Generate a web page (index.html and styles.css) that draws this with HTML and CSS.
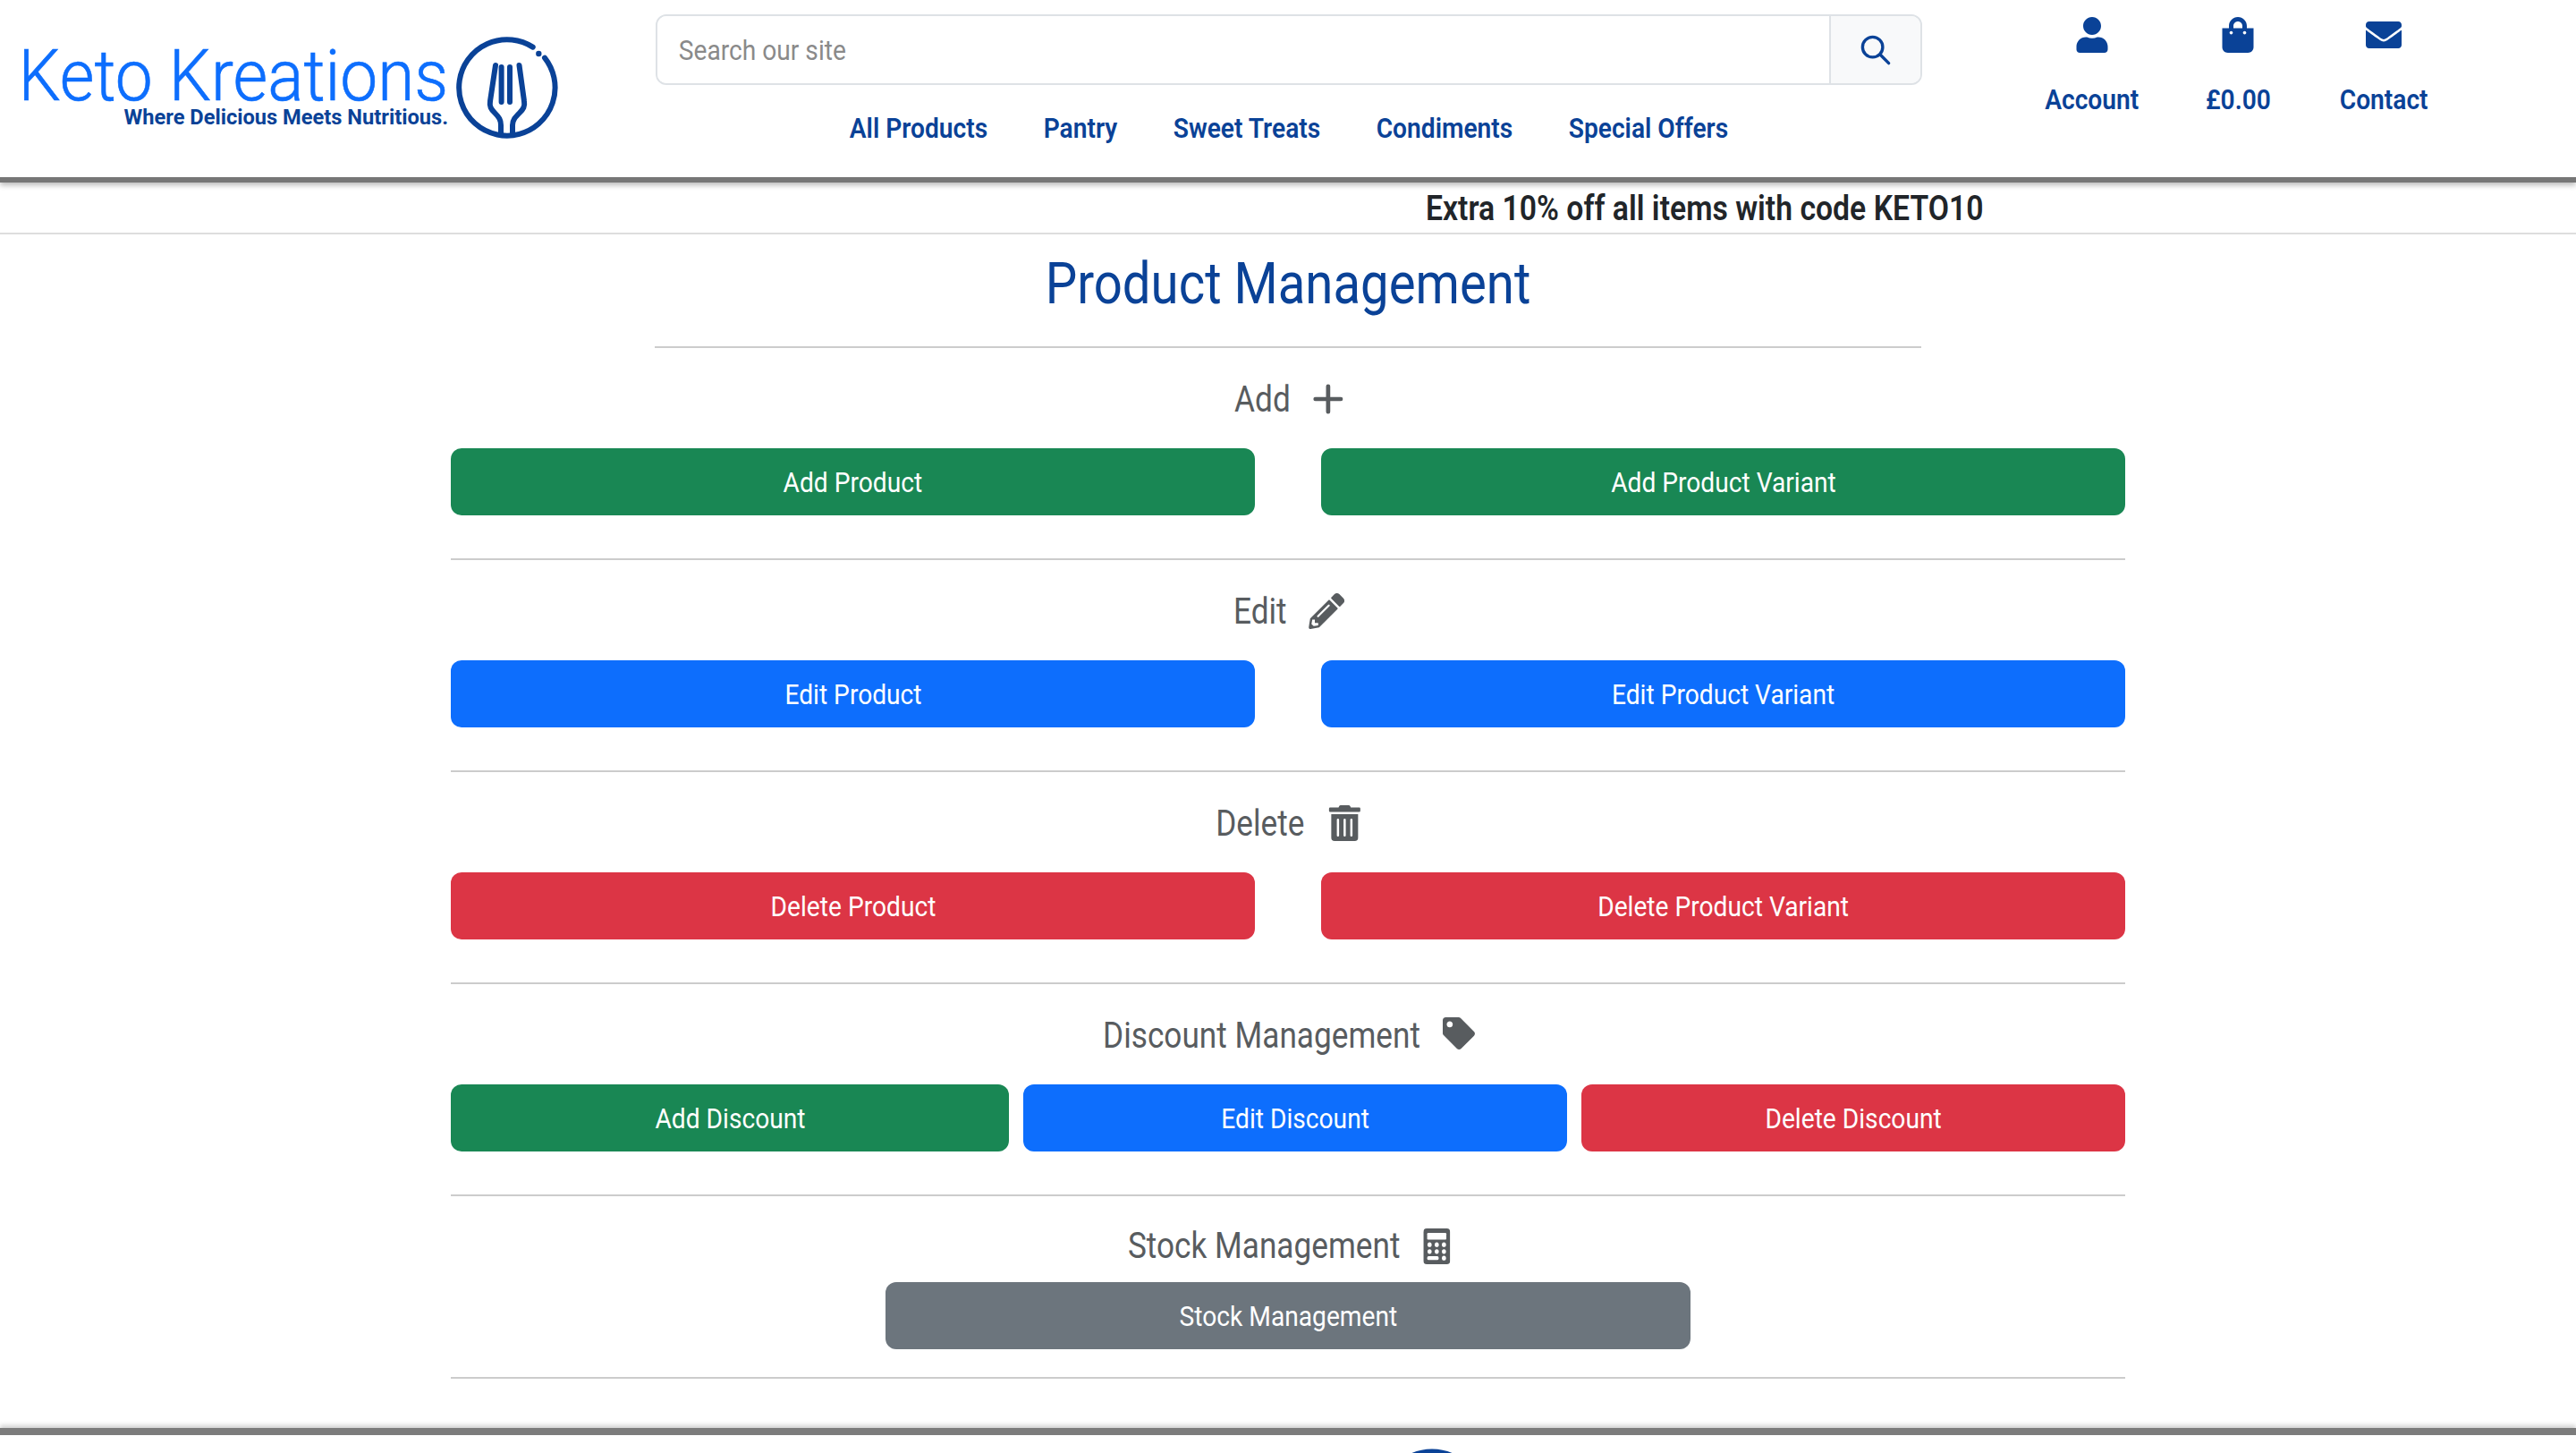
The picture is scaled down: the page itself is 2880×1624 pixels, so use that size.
FILE: index.html
```html
<!DOCTYPE html>
<html lang="en">
<head>
  <meta charset="UTF-8">
  <title>Product Management</title>
  <link rel="stylesheet" href="styles.css">
</head>
<body>
  <header class="site-header">
    <a class="logo" href="#">
      <span class="logo-text">
        <span class="logo-name">Keto Kreations</span>
        <span class="logo-tag">Where Delicious Meets Nutritious.</span>
      </span>
      <svg class="logo-mark" viewBox="0 0 116 116" fill="none" stroke="#0a4297" stroke-width="6" stroke-linecap="round">
        <path d="M86.7 12.6 A53.7 53.7 0 1 0 100 24.6"/>
        <circle cx="93.3" cy="20" r="3.2" fill="#0a4297" stroke="none"/>
        <path d="M45 33 L39 73 C38 79 40 82 44 86 C49 91 51 94 51 100 L51 109"/>
        <path d="M71.5 33 L77 73 C78 79 76 82 72 86 C67 91 64 94 64 100 L64 109"/>
        <path d="M51.6 35 V74 M61 35 V74"/>
      </svg>
    </a>

    <div class="header-middle">
      <form class="search">
        <input class="search-input" type="text" placeholder="Search our site">
        <button class="search-btn" type="button">
          <svg viewBox="0 0 32 32" class="search-icon"><circle cx="13" cy="13" r="10" fill="none" stroke="#0a4297" stroke-width="3"/><path d="M20.5 20.5 L29 29" stroke="#0a4297" stroke-width="3" stroke-linecap="round"/></svg>
        </button>
      </form>
      <nav class="main-nav">
        <a href="#">All Products</a>
        <a href="#">Pantry</a>
        <a href="#">Sweet Treats</a>
        <a href="#">Condiments</a>
        <a href="#">Special Offers</a>
      </nav>
    </div>

    <div class="header-links">
      <a href="#">
        <svg viewBox="0 0 448 512"><path d="M224 256c70.7 0 128-57.3 128-128S294.7 0 224 0 96 57.3 96 128s57.3 128 128 128zm89.6 32h-16.7c-22.2 10.2-46.9 16-72.9 16s-50.6-5.8-72.9-16h-16.7C60.2 288 0 348.2 0 422.4V464c0 26.5 21.5 48 48 48h352c26.5 0 48-21.5 48-48v-41.6c0-74.2-60.2-134.4-134.4-134.4z"/></svg>
        <span class="squeeze">Account</span>
      </a>
      <a href="#">
        <svg viewBox="0 0 448 512"><path d="M352 160v-32C352 57.42 294.579 0 224 0 153.42 0 96 57.42 96 128v32H0v272c0 44.183 35.817 80 80 80h288c44.183 0 80-35.817 80-80V160h-96zm-192-32c0-35.29 28.71-64 64-64s64 28.71 64 64v32H160v-32zm160 120c-13.255 0-24-10.745-24-24s10.745-24 24-24 24 10.745 24 24-10.745 24-24 24zm-192 0c-13.255 0-24-10.745-24-24s10.745-24 24-24 24 10.745 24 24-10.745 24-24 24z"/></svg>
        <span class="squeeze">£0.00</span>
      </a>
      <a href="#">
        <svg viewBox="0 0 512 512"><path d="M502.3 190.8c3.9-3.1 9.7-.2 9.7 4.7V400c0 26.5-21.5 48-48 48H48c-26.5 0-48-21.5-48-48V195.6c0-5 5.7-7.8 9.7-4.7 22.4 17.4 52.1 39.5 154.1 113.6 21.1 15.4 56.7 47.8 92.2 47.6 35.7.3 72-32.8 92.3-47.6 102-74.1 131.6-96.3 154-113.7zM256 320c23.2.4 56.6-29.2 73.4-41.4 132.7-96.3 142.8-104.7 173.4-128.7 5.8-4.5 9.2-11.5 9.2-18.9v-19c0-26.5-21.5-48-48-48H48C21.5 64 0 85.5 0 112v19c0 7.4 3.4 14.3 9.2 18.9 30.6 23.9 40.7 32.4 173.4 128.7 16.8 12.2 50.2 41.8 73.4 41.4z"/></svg>
        <span class="squeeze">Contact</span>
      </a>
    </div>
  </header>

  <div class="promo"><span class="promo-text">Extra 10% off all items with code KETO10</span></div>

  <main class="management">
    <div class="title-block">
      <h1 class="page-title">Product Management</h1>
    </div>

    <section class="group">
      <h2 class="group-title"><span>Add</span>
        <svg class="icon icon-plus" viewBox="0 0 36 36"><path d="M18 3 V33 M3 18 H33" stroke="#585c5f" stroke-width="5" stroke-linecap="round"/></svg>
      </h2>
      <div class="btn-row two">
        <a class="btn green" href="#"><span class="squeeze">Add Product</span></a>
        <a class="btn green" href="#"><span class="squeeze">Add Product Variant</span></a>
      </div>
    </section>

    <section class="group">
      <h2 class="group-title"><span>Edit</span>
        <svg class="icon" viewBox="0 0 512 512"><path d="M497.9 142.1l-46.1 46.1c-4.7 4.7-12.3 4.7-17 0l-111-111c-4.7-4.7-4.7-12.3 0-17l46.1-46.1c18.7-18.7 49.1-18.7 67.9 0l60.1 60.1c18.8 18.7 18.8 49.1 0 67.9zM284.2 99.8L21.6 362.4.4 483.9c-2.9 16.4 11.4 30.6 27.8 27.8l121.5-21.3 262.6-262.6c4.7-4.7 4.7-12.3 0-17l-111-111c-4.8-4.7-12.4-4.7-17.1 0zM124.1 339.9c-5.5-5.5-5.5-14.3 0-19.8l154-154c5.5-5.5 14.3-5.5 19.8 0s5.5 14.3 0 19.8l-154 154c-5.5 5.5-14.3 5.5-19.8 0zM88 424h48v36.3l-64.5 11.3-31.1-31.1L51.7 376H88v48z"/></svg>
      </h2>
      <div class="btn-row two">
        <a class="btn blue" href="#"><span class="squeeze">Edit Product</span></a>
        <a class="btn blue" href="#"><span class="squeeze">Edit Product Variant</span></a>
      </div>
    </section>

    <section class="group">
      <h2 class="group-title"><span>Delete</span>
        <svg class="icon icon-trash" viewBox="0 0 448 512"><path d="M32 464a48 48 0 0 0 48 48h288a48 48 0 0 0 48-48V128H32zm272-256a16 16 0 0 1 32 0v224a16 16 0 0 1-32 0zm-96 0a16 16 0 0 1 32 0v224a16 16 0 0 1-32 0zm-96 0a16 16 0 0 1 32 0v224a16 16 0 0 1-32 0zM432 32H312l-9.4-18.7A24 24 0 0 0 281.1 0H166.8a23.72 23.72 0 0 0-21.4 13.3L136 32H16A16 16 0 0 0 0 48v32a16 16 0 0 0 16 16h416a16 16 0 0 0 16-16V48a16 16 0 0 0-16-16z"/></svg>
      </h2>
      <div class="btn-row two">
        <a class="btn red" href="#"><span class="squeeze">Delete Product</span></a>
        <a class="btn red" href="#"><span class="squeeze">Delete Product Variant</span></a>
      </div>
    </section>

    <section class="group">
      <h2 class="group-title"><span>Discount Management</span>
        <svg class="icon icon-tag" viewBox="0 0 512 512"><path d="M0 252.118V48C0 21.49 21.49 0 48 0h204.118a48 48 0 0 1 33.941 14.059l211.882 211.882c18.745 18.745 18.745 49.137 0 67.882L293.823 497.941c-18.745 18.745-49.137 18.745-67.882 0L14.059 286.059A48 48 0 0 1 0 252.118zM112 64c-26.51 0-48 21.49-48 48s21.49 48 48 48 48-21.49 48-48-21.49-48-48-48z"/></svg>
      </h2>
      <div class="btn-row three">
        <a class="btn green" href="#"><span class="squeeze">Add Discount</span></a>
        <a class="btn blue" href="#"><span class="squeeze">Edit Discount</span></a>
        <a class="btn red" href="#"><span class="squeeze">Delete Discount</span></a>
      </div>
    </section>

    <section class="group stock">
      <h2 class="group-title"><span>Stock Management</span>
        <svg class="icon icon-calc" viewBox="0 0 448 512" preserveAspectRatio="none">
          <rect width="448" height="512" rx="56"/>
          <rect x="64" y="64" width="320" height="96" rx="16" fill="#fff"/>
          <g fill="#fff">
            <circle cx="104" cy="232" r="34"/><circle cx="224" cy="232" r="34"/><circle cx="344" cy="232" r="34"/>
            <circle cx="104" cy="330" r="34"/><circle cx="224" cy="330" r="34"/><circle cx="344" cy="330" r="34"/>
            <rect x="64" y="396" width="192" height="56" rx="24"/><circle cx="344" cy="424" r="34"/>
          </g>
        </svg>
      </h2>
      <div class="btn-row one">
        <a class="btn gray" href="#"><span class="squeeze">Stock Management</span></a>
      </div>
    </section>
  </main>

  <footer class="site-footer">
    <svg class="footer-mark" viewBox="0 0 116 116"><circle cx="58" cy="58" r="53.7" fill="none" stroke="#0a4297" stroke-width="5.6"/></svg>
  </footer>
</body>
</html>
```

FILE: styles.css
```css
* {
  box-sizing: border-box;
}

html,
body {
  height: 100%;
}

body {
  margin: 0;
  background: #fff;
  font-family: Roboto, sans-serif;
  overflow: hidden;
}

a {
  text-decoration: none;
}

/* the site text is narrower than plain Roboto */
.squeeze {
  display: inline-block;
  transform: scaleX(0.88);
}

/* header */
.site-header {
  display: flex;
  height: 204px;
  border-bottom: 6px solid #767676;
  box-shadow: 0 3px 6px rgba(0, 0, 0, 0.28);
}

.logo {
  width: 720px;
  padding: 40px 0 0 21px;
  display: flex;
  align-items: flex-start;
  gap: 8px;
}

.logo-text {
  display: flex;
  flex-direction: column;
  align-items: flex-end;
  width: 480px;
  padding-top: 12px;
}

.logo-name {
  font-size: 80px;
  line-height: 66px;
  font-weight: 300;
  color: #0d6efd;
  -webkit-text-stroke: 0.6px #0d6efd;
  white-space: nowrap;
  transform: scaleX(0.935);
  transform-origin: right center;
}

.logo-tag {
  font-size: 24px;
  line-height: 26px;
  font-weight: 700;
  color: #0a4297;
  white-space: nowrap;
  transform: scaleX(0.985);
  transform-origin: right center;
}

.logo-mark {
  width: 116px;
  height: 116px;
}

.header-middle {
  width: 1440px;
  padding: 16px 11px 0 13px;
}

.search {
  display: flex;
  height: 79px;
  border: 2px solid #dee2e6;
  border-radius: 12px;
  overflow: hidden;
}

.search-input {
  flex: none;
  width: 1488px;
  margin-right: -178px;
  border: 0;
  padding: 0 27px;
  font-family: inherit;
  font-size: 32px;
  outline: none;
  transform: scaleX(0.88);
  transform-origin: left center;
}

.search-input::placeholder {
  color: #8a8a8a;
}

.search-btn {
  flex: 1;
  border: 0;
  border-left: 2px solid #dee2e6;
  background: #f8f9fa;
  display: flex;
  align-items: center;
  justify-content: center;
}

.search-icon {
  width: 36px;
  height: 36px;
}

.main-nav {
  display: flex;
  justify-content: center;
  gap: 71px;
  margin-top: 26px;
  transform: scaleX(0.88);
}

.main-nav a,
.header-links a {
  font-size: 32px;
  line-height: 44px;
  font-weight: 600;
  color: #0a4297;
  white-space: nowrap;
}

.header-links {
  width: 720px;
  display: flex;
  justify-content: center;
  padding: 19px 36px 0 0;
}

.header-links a {
  width: 163px;
  display: flex;
  flex-direction: column;
  align-items: center;
  gap: 30px;
}

.header-links svg {
  height: 40px;
  width: 40px;
  fill: #0a4297;
}

/* promo strip */
.promo {
  height: 58px;
  border-bottom: 2px solid #ddd;
  padding-left: 1594px;
}

.promo-text {
  display: inline-block;
  font-size: 38px;
  line-height: 58px;
  font-weight: 600;
  color: #212529;
  white-space: nowrap;
  transform: scaleX(0.888);
  transform-origin: left center;
}

/* management */
.management {
  width: 1872px;
  margin: 0 auto;
}

.title-block {
  width: 1416px;
  margin: 0 auto;
  height: 127px;
  border-bottom: 2px solid #ccc;
}

.page-title {
  margin: 0;
  text-align: center;
  font-size: 64px;
  line-height: 112px;
  font-weight: 400;
  color: #0a4297;
  transform: scaleX(0.88);
}

.group {
  height: 237px;
  border-bottom: 2px solid #ccc;
}

.group.stock {
  height: 204px;
}

.group-title {
  height: 112px;
  margin: 0;
  padding-top: 2px;
  display: flex;
  align-items: center;
  justify-content: center;
  gap: 31px;
  font-size: 40px;
  font-weight: 400;
  color: #585c5f;
  transform: scaleX(0.88);
}

.stock .group-title {
  height: 96px;
  padding-top: 15px;
}

/* undo the heading's squeeze so the glyphs keep their shape */
.icon {
  width: 40px;
  height: 40px;
  fill: #585c5f;
  transform: scaleX(1.136);
}

.icon-plus {
  width: 34px;
  height: 34px;
}

.icon-tag {
  width: 36px;
  height: 36px;
  margin-top: -4px;
}

.icon-calc {
  width: 30px;
}

.btn-row {
  display: grid;
}

.btn-row.two {
  grid-template-columns: 1fr 1fr;
  column-gap: 74px;
}

.btn-row.three {
  grid-template-columns: 624px 1fr 1fr;
  column-gap: 16px;
}

.btn-row.one {
  width: 900px;
  margin: 0 auto;
}

.btn {
  height: 75px;
  display: flex;
  align-items: center;
  justify-content: center;
  border-radius: 12px;
  font-size: 32px;
  color: #fff;
}

.green {
  background: #198754;
}

.blue {
  background: #0d6efd;
}

.red {
  background: #dc3545;
}

.gray {
  background: #6c757d;
}

/* footer, only its top edge is inside the window */
.site-footer {
  margin-top: 55px;
  height: 28px;
  border-top: 8px solid #7c7c7c;
  box-shadow: 0 -3px 5px rgba(0, 0, 0, 0.18);
  display: flex;
  justify-content: center;
  padding-top: 14px;
  overflow: hidden;
}

.footer-mark {
  flex: none;
  width: 116px;
  height: 116px;
  margin-left: 322px;
}
```
